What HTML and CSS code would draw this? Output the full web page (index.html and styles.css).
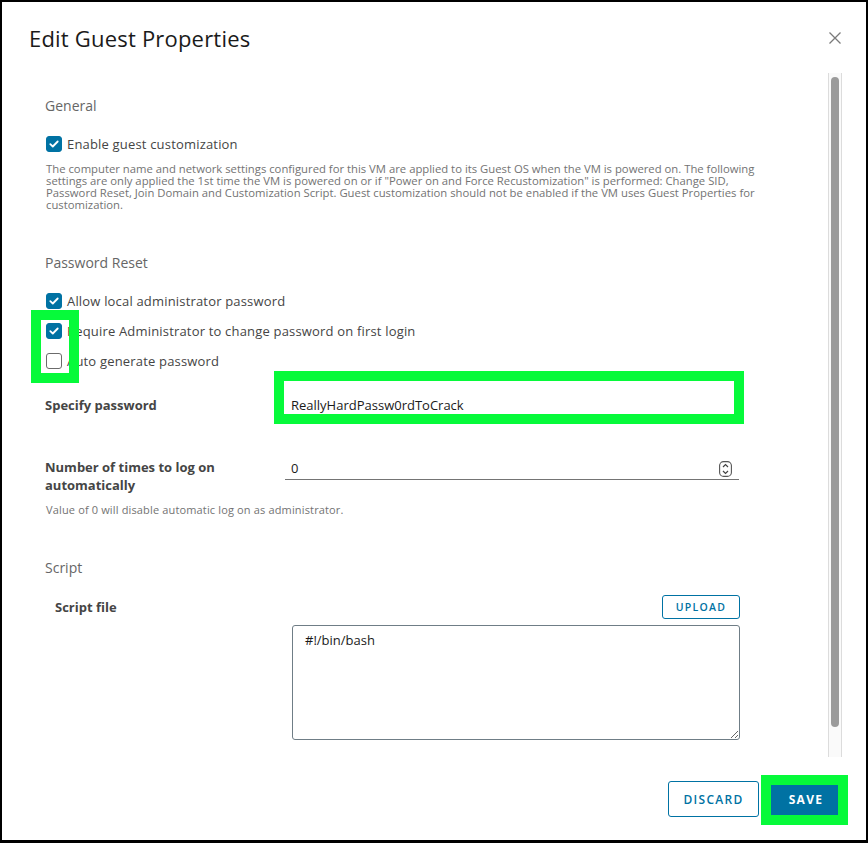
FILE: index.html
```html
<!DOCTYPE html>
<html lang="en">
<head>
<meta charset="utf-8">
<title>Edit Guest Properties</title>
<link rel="stylesheet" href="styles.css">
</head>
<body>
<div class="modal">
  <div class="header">
    <h1 class="title">Edit Guest Properties</h1>
    <svg class="close" width="12" height="12" viewBox="0 0 12 12"><path d="M0.5 0.5 L11.5 11.5 M11.5 0.5 L0.5 11.5" stroke="#7a7a7a" stroke-width="1.3" fill="none"/></svg>
  </div>
  <div class="body">
    <div class="content">
      <h2 class="section first">General</h2>
      <label class="check-row first-row"><span class="box on"><svg width="10" height="8" viewBox="0 0 10 8"><path d="M1.3 4.2 L3.8 6.5 L8.7 1.5" stroke="#fff" stroke-width="1.8" fill="none" stroke-linecap="round" stroke-linejoin="round"/></svg></span>Enable guest customization</label>
      <p class="desc">The computer name and network settings configured for this VM are applied to its Guest OS when the VM is powered on. The following settings are only applied the 1st time the VM is powered on or if "Power on and Force Recustomization" is performed: Change SID,<br>Password Reset, Join Domain and Customization Script. Guest customization should not be enabled if the VM uses Guest Properties for customization.</p>

      <h2 class="section">Password Reset</h2>
      <label class="check-row first-row"><span class="box on"><svg width="10" height="8" viewBox="0 0 10 8"><path d="M1.3 4.2 L3.8 6.5 L8.7 1.5" stroke="#fff" stroke-width="1.8" fill="none" stroke-linecap="round" stroke-linejoin="round"/></svg></span>Allow local administrator password</label>
      <label class="check-row"><span class="box on"><svg width="10" height="8" viewBox="0 0 10 8"><path d="M1.3 4.2 L3.8 6.5 L8.7 1.5" stroke="#fff" stroke-width="1.8" fill="none" stroke-linecap="round" stroke-linejoin="round"/></svg></span>Require Administrator to change password on first login</label>
      <label class="check-row"><span class="box"></span>Auto generate password</label>

      <div class="form-row pw-row">
        <span class="flabel">Specify password</span>
        <input class="field" type="text" value="ReallyHardPassw0rdToCrack">
      </div>

      <div class="form-row num-row">
        <span class="flabel">Number of times to log on automatically</span>
        <div class="num-field">
          <span class="num-val">0</span>
          <svg class="spin" width="13" height="16" viewBox="0 0 13 16"><rect x="0.6" y="0.6" width="11.8" height="14.8" rx="4" fill="none" stroke="#555" stroke-width="1.1"/><path d="M4 6 L6.5 3.6 L9 6 M4 10 L6.5 12.4 L9 10" stroke="#444" stroke-width="1.2" fill="none"/></svg>
        </div>
      </div>
      <p class="help">Value of 0 will disable automatic log on as administrator.</p>

      <h2 class="section script-h">Script</h2>
      <div class="script-row">
        <span class="flabel">Script file</span>
        <button class="btn-outline upload">UPLOAD</button>
      </div>
      <textarea class="script">#!/bin/bash</textarea>
    </div>
    <div class="scrollbar"><div class="thumb"></div></div>
  </div>
  <div class="footer">
    <button class="btn-outline discard">DISCARD</button>
    <button class="btn-primary">SAVE</button>
  </div>

  <div class="mark mark-checks"></div>
  <div class="mark mark-pw"></div>
  <div class="mark mark-save"></div>
</div>
</body>
</html>
```

FILE: styles.css
```css
* { box-sizing: border-box; }
html, body { margin: 0; padding: 0; background: #000; }
body { font-family: "Open Sans", "Liberation Sans", sans-serif; }

.modal {
  position: relative;
  width: 868px;
  height: 843px;
  background: #fff;
  border: 2px solid #000;
  border-bottom-width: 3px;
  display: flex;
  flex-direction: column;
}

.header {
  height: 71px;
  padding: 23px 25px 0 27px;
  display: flex;
  justify-content: space-between;
  align-items: flex-start;
}
.title {
  margin: 0;
  font-size: 22px;
  line-height: 26px;
  letter-spacing: 0.2px;
  font-weight: 400;
  color: #1a1a1a;
}
.close { margin-top: 7px; }

.body {
  height: 684px;
  display: flex;
  padding-right: 24px;
}
.content {
  flex: 1;
  padding-left: 43px;
  padding-right: 20px;
}
.scrollbar {
  width: 14px;
  height: 684px;
  border-left: 1px solid #dcdcdc;
  border-right: 1px solid #dcdcdc;
  background: #fafafa;
  padding: 4px 2px 0 2px;
}
.thumb {
  width: 8px;
  height: 650px;
  border-radius: 4px;
  background: #9b9b9b;
}

.section {
  margin: 42px 0 0 0;
  font-size: 14px;
  line-height: 20px;
  font-weight: 400;
  color: #666;
}
.section.first { margin-top: 23px; }

.check-row {
  display: flex;
  align-items: center;
  height: 20px;
  margin-top: 10px;
  font-size: 13px;
  letter-spacing: 0.18px;
  color: #454545;
}
.check-row.first-row { margin-top: 18px; }
.box {
  width: 16px;
  height: 16px;
  margin-left: 1px;
  margin-right: 5px;
  border-radius: 3px;
  border: 1px solid #6b6b6b;
  background: #fff;
  display: flex;
  align-items: center;
  justify-content: center;
}
.box.on { background: #0072a3; border-color: #0072a3; }

.desc {
  margin: 9px 0 0 1px;
  width: 718px;
  font-size: 11.3px;
  line-height: 12px;
  color: #737373;
}

.form-row {
  display: grid;
  grid-template-columns: 240px 454px;
}
.flabel {
  font-size: 13px;
  font-weight: 700;
  color: #454545;
}
.pw-row { margin-top: 22px; align-items: center; height: 24px; }
.field {
  height: 24px;
  border: 0;
  border-bottom: 1px solid #747474;
  padding: 0 6px;
  font: inherit;
  font-size: 13px;
  color: #1a1a1a;
  outline: none;
}

.num-row { margin-top: 41px; }
.num-row .flabel { line-height: 18px; width: 190px; }
.num-field {
  height: 22px;
  border-bottom: 1px solid #747474;
  display: flex;
  justify-content: space-between;
  align-items: center;
  padding: 0 7px 2px 6px;
  font-size: 13px;
  color: #1a1a1a;
}
.spin { margin-top: 2px; }

.help {
  margin: 10px 0 0 1px;
  font-size: 11px;
  letter-spacing: 0.15px;
  line-height: 12px;
  color: #737373;
}

.section.script-h { margin-top: 42px; }

.script-row {
  margin-top: 17px;
  width: 695px;
  height: 24px;
  display: flex;
  justify-content: space-between;
  align-items: center;
}
.script-row .flabel { padding-left: 10px; }

.btn-outline {
  background: #fff;
  border: 1px solid #0072a3;
  border-radius: 3px;
  color: #0072a3;
  font-family: inherit;
  font-weight: 600;
  letter-spacing: 1.3px;
  cursor: pointer;
}
.upload {
  width: 78px;
  height: 24px;
  font-size: 10.5px;
  padding: 0;
}

.script {
  display: block;
  margin: 6px 0 0 247px;
  width: 448px;
  height: 115px;
  border: 1px solid #6f7d86;
  border-radius: 3px;
  padding: 5px 12px;
  font-family: inherit;
  font-size: 13px;
  color: #1a1a1a;
  resize: both;
  outline: none;
}

.footer {
  flex: 1;
  display: flex;
  justify-content: flex-end;
  align-items: flex-start;
  padding: 24px 22px 0 0;
  gap: 9px;
}
.discard {
  width: 91px;
  height: 36px;
  font-size: 12px;
  padding: 0;
}
.btn-primary {
  width: 76px;
  height: 36px;
  border: 0;
  border-radius: 3px;
  background: #0072a3;
  color: #fff;
  font-family: inherit;
  font-size: 12px;
  font-weight: 700;
  letter-spacing: 1.3px;
  padding: 0;
}

.mark {
  position: absolute;
  border: 10px solid #06fa3a;
  pointer-events: none;
}
.mark-checks { left: 29px; top: 308px; width: 48px; height: 73px; }
.mark-pw { left: 272px; top: 369px; width: 470px; height: 53px; }
.mark-save { left: 759px; top: 773px; width: 87px; height: 50px; }
```
